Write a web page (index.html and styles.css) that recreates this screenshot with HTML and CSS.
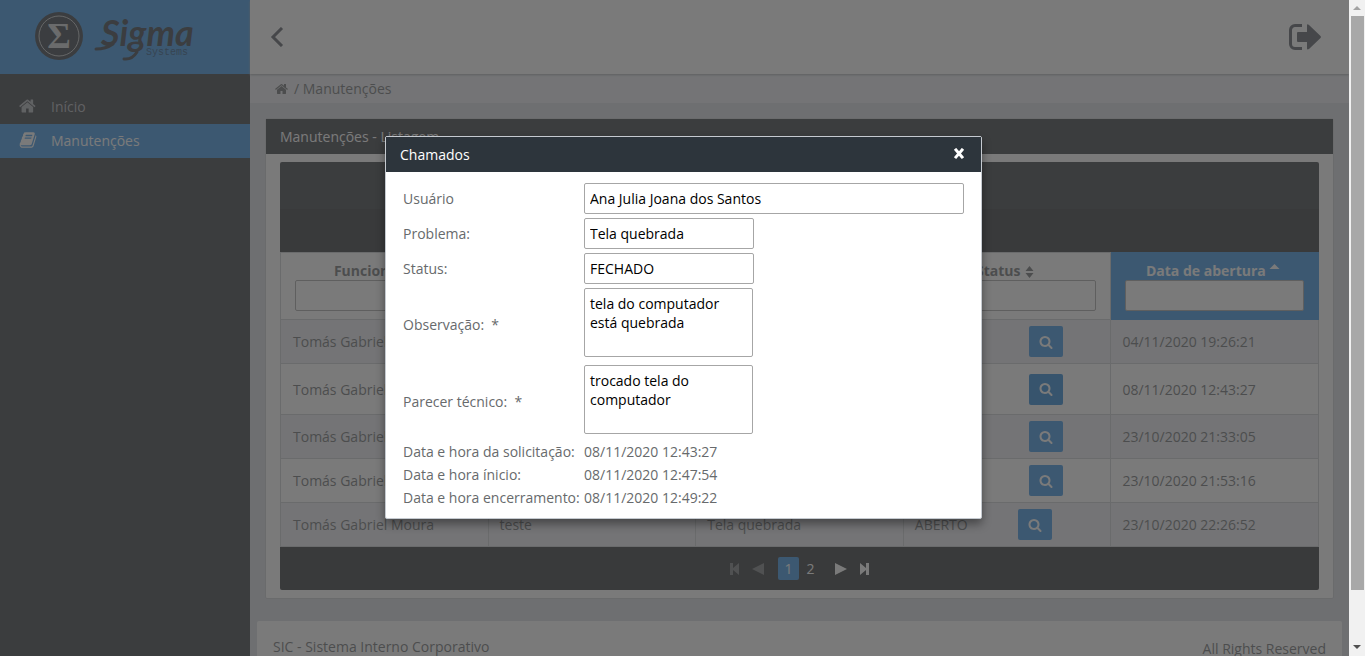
FILE: index.html
```html
<!DOCTYPE html>
<html lang="pt-BR">
<head>
<meta charset="utf-8">
<title>Manutenções</title>
<link rel="stylesheet" href="styles.css">
</head>
<body>
<svg class="defs" aria-hidden="true">
  <symbol id="home" viewBox="0 0 1792 1792"><path d="M1408 992v480q0 26-19 45t-45 19h-384v-384h-256v384h-384q-26 0-45-19t-19-45v-480q0-1 .5-3t.5-3l575-474 575 474q1 2 1 6zm223-69l-62 74q-8 9-21 11h-3q-13 0-21-7l-692-577-692 577q-12 8-24 7-13-2-21-11l-62-74q-8-10-7-23.5t11-21.5l719-599q32-26 76-26t76 26l244 204v-195q0-14 9-23t23-9h192q14 0 23 9t9 23v408l219 182q10 8 11 21.5t-7 23.5z"/></symbol>
  <symbol id="book" viewBox="0 0 1792 1792"><path d="M1703 478q40 57 18 129l-275 906q-19 64-76.5 107.5t-122.5 43.5h-923q-77 0-148.5-53.5t-99.5-131.5q-24-67-2-127 0-4 3-27t4-37q1-8-3-21.5t-3-19.5q2-11 8-21t16.5-23.5 16.5-23.5q23-38 45-91.5t30-91.5q3-10 .5-30t-.5-28q3-11 17-28t17-23q21-36 42-92t25-90q1-9-2.5-32t.5-28q4-13 22-30.5t22-22.5q19-26 42.5-84.5t27.5-96.5q1-8-3-25.5t-2-26.5q2-8 9-18t18-23 17-21q8-12 16.5-30.5t15-35 16-36 19.5-32 26.5-23.5 36-11.5 47.5 5.5l-1 3q38-9 51-9h761q74 0 114 56t18 130l-274 906q-36 119-71.5 153.5t-128.5 34.5h-869q-27 0-38 15-11 16-1 43 24 70 144 70h923q29 0 56-15.5t35-41.5l300-987q7-22 5-57 38 15 59 43zm-1064 2q-4 13 2 22.5t20 9.5h608q13 0 25.5-9.5t16.5-22.5l21-64q4-13-2-22.5t-20-9.5h-608q-13 0-25.5 9.5t-16.5 22.5zm-83 256q-4 13 2 22.5t20 9.5h608q13 0 25.5-9.5t16.5-22.5l21-64q4-13-2-22.5t-20-9.5h-608q-13 0-25.5 9.5t-16.5 22.5z"/></symbol>
  <symbol id="search" viewBox="0 0 1792 1792"><path d="M1216 832q0-185-131.5-316.5t-316.5-131.5-316.5 131.5-131.5 316.5 131.5 316.5 316.5 131.5 316.5-131.5 131.5-316.5zm512 832q0 52-38 90t-90 38q-54 0-90-38l-343-342q-179 124-399 124-143 0-273.5-55.5t-225-150-150-225-55.5-273.5 55.5-273.5 150-225 225-150 273.5-55.5 273.5 55.5 225 150 150 225 55.5 273.5q0 220-124 399l343 343q37 37 37 90z"/></symbol>
  <symbol id="sort" viewBox="0 0 8 12"><path d="M4 0l4 5H0zM4 12l4-5H0z"/></symbol>
</svg>
<div class="page">
  <nav class="sidebar">
    <a class="brand" href="#" aria-label="Sigma Systems">
      <svg class="logo" viewBox="0 0 250 74">
        <circle class="ink" cx="59" cy="36" r="24"/>
        <circle class="ring" cx="59" cy="36" r="20"/>
        <text class="logo-sum" x="59" y="48" text-anchor="middle">Σ</text>
        <text class="logo-name" x="101" y="46">Sigma</text>
        <path class="swash" d="M96 49q10 0 17-5M124 59q8 1 13-7"/>
        <text class="logo-sub" x="146" y="55">Systems</text>
      </svg>
    </a>
    <ul class="menu">
      <li><a href="#"><svg class="menu-icon"><use href="#home"/></svg>Início</a></li>
      <li><a class="active" href="#"><svg class="menu-icon"><use href="#book"/></svg>Manutenções</a></li>
    </ul>
  </nav>
  <div class="main">
    <header class="topbar">
      <button class="plain" aria-label="Recolher menu"><svg width="14" height="20" viewBox="0 0 14 20"><path class="chevron" d="M12 1L3 10l9 9"/></svg></button>
      <button class="plain" aria-label="Sair"><svg width="32" height="26" viewBox="0 0 32 26"><path class="door" d="M13 1.500H6A4.500 4.500 0 0 0 1.500 6v14A4.500 4.500 0 0 0 6 24.500h7"/><path d="M8 9q0-1 1-1h9V1.500q0-2 2-.5l11.500 11q.8 1 0 2L20 25q-2 1-2-.5V18H9q-1 0-1-1z"/></svg></button>
    </header>
    <div class="crumbs"><svg class="crumb-icon"><use href="#home"/></svg><span>/ Manutenções</span></div>
    <main class="content">
      <section class="panel">
        <h1 class="bar">Manutenções - Listagem</h1>
        <div class="panel-body">
          <div class="table-head"></div>
          <div class="table-tools"></div>
          <table class="grid">
            <thead>
              <tr>
                <th><label for="f1">Funcionário <svg class="sort"><use href="#sort"/></svg></label><input id="f1"></th>
                <th><label for="f2">Descrição <svg class="sort"><use href="#sort"/></svg></label><input id="f2"></th>
                <th><label for="f3">Problema <svg class="sort"><use href="#sort"/></svg></label><input id="f3"></th>
                <th><label for="f4">Status <svg class="sort"><use href="#sort"/></svg></label><input id="f4"></th>
                <th class="sorted"><label for="f5">Data de abertura <svg class="sort" viewBox="0 0 8 12"><path d="M4 0l5 5H-1z"/></svg></label><input id="f5"></th>
              </tr>
            </thead>
            <tbody>
              <tr><td>Tomás Gabriel Moura</td><td>teste</td><td>Tela quebrada</td><td><div class="status">FECHADO<button class="view" aria-label="Ver"><svg><use href="#search"/></svg></button></div></td><td>04/11/2020 19:26:21</td></tr>
              <tr class="tall"><td>Tomás Gabriel Moura</td><td>tela do computador está quebrada</td><td>Tela quebrada</td><td><div class="status">FECHADO<button class="view current" aria-label="Ver"><svg><use href="#search"/></svg></button></div></td><td>08/11/2020 12:43:27</td></tr>
              <tr><td>Tomás Gabriel Moura</td><td>teste</td><td>Tela quebrada</td><td><div class="status">FECHADO<button class="view" aria-label="Ver"><svg><use href="#search"/></svg></button></div></td><td>23/10/2020 21:33:05</td></tr>
              <tr><td>Tomás Gabriel Moura</td><td>teste</td><td>Tela quebrada</td><td><div class="status">FECHADO<button class="view" aria-label="Ver"><svg><use href="#search"/></svg></button></div></td><td>23/10/2020 21:53:16</td></tr>
              <tr><td>Tomás Gabriel Moura</td><td>teste</td><td>Tela quebrada</td><td><div class="status">ABERTO<button class="view" aria-label="Ver"><svg><use href="#search"/></svg></button></div></td><td>23/10/2020 22:26:52</td></tr>
            </tbody>
          </table>
          <div class="pager">
            <button disabled aria-label="Primeira"><svg viewBox="0 0 12 12"><path d="M1 0h3v5l6-5v12L4 7v5H1z"/></svg></button>
            <button disabled aria-label="Anterior"><svg viewBox="0 0 12 12"><path d="M12 0v12L0 6z"/></svg></button>
            <span class="pages"><button class="on">1</button><button>2</button></span>
            <button aria-label="Próxima"><svg viewBox="0 0 12 12"><path d="M0 0v12l12-6z"/></svg></button>
            <button aria-label="Última"><svg viewBox="0 0 12 12"><path d="M11 0H8v5L2 0v12l6-5v5h3z"/></svg></button>
          </div>
        </div>
      </section>
      <footer class="footer"><span>SIC - Sistema Interno Corporativo</span><span class="rights">All Rights Reserved</span></footer>
    </main>
  </div>
  <div class="overlay">
    <div class="dialog" role="dialog" aria-labelledby="dlg">
      <div class="dialog-bar"><h2 id="dlg">Chamados</h2><button class="plain close" aria-label="Fechar"><svg width="12" height="12" viewBox="0 0 12 12"><path d="M3 2l6 7M9 2L3 9"/></svg></button></div>
      <form class="form">
        <label for="user">Usuário</label><input class="wide" id="user" value="Ana Julia Joana dos Santos">
        <label for="prob">Problema:</label><input id="prob" value="Tela quebrada">
        <label for="stat">Status:</label><input id="stat" value="FECHADO">
        <label for="obs">Observação: &nbsp;*</label><textarea id="obs">tela do computador está quebrada</textarea>
        <label for="tec">Parecer técnico: &nbsp;*</label><textarea id="tec">trocado tela do computador</textarea>
      </form>
      <dl class="dates">
        <dt>Data e hora da solicitação:</dt><dd>08/11/2020 12:43:27</dd>
        <dt>Data e hora ínicio:</dt><dd>08/11/2020 12:47:54</dd>
        <dt>Data e hora encerramento:</dt><dd>08/11/2020 12:49:22</dd>
      </dl>
    </div>
  </div>
</div>
<div class="scroll" aria-hidden="true">
  <svg viewBox="0 0 16 16"><path class="dim" d="M8 6l4 4H4z"/></svg>
  <div class="track"><div class="thumb"></div></div>
  <svg viewBox="0 0 16 16"><path d="M8 9L4 5h8z"/></svg>
</div>
</body>
</html>
```
FILE: styles.css
```css
* { box-sizing: border-box; }
body {
  margin: 0;
  height: 100vh;
  display: flex;
  overflow: hidden;
  font: 14px/19px "Open Sans", "Noto Sans", sans-serif;
  color: #676a6c;
}
button, input, textarea { font: inherit; }
button { cursor: pointer; }
a { color: inherit; text-decoration: none; }
svg { fill: currentColor; }
.defs { position: absolute; width: 0; height: 0; }
.page { position: relative; flex: 1; display: flex; overflow: hidden; background: #d8dbe2; }
.plain { border: 0; background: none; padding: 0; color: #50565e; display: flex; }

.sidebar { width: 250px; flex: none; background: #2e3238; }
.brand { display: block; height: 74px; background: #308ee2; }
.logo { display: block; width: 250px; height: 74px; }
.ink { fill: #2d353c; }
.ring { fill: none; stroke: #b8bcc0; stroke-width: 1; }
.logo-sum { font: bold 36px "Liberation Serif", serif; fill: #c8ccd0; }
.logo-name { font: italic bold 36px Lato, sans-serif; fill: #2d353c; }
.logo-sub { font: 10px "Liberation Mono", monospace; fill: #1c4a78; }
.swash { fill: none; stroke: #2d353c; stroke-width: 3; stroke-linecap: round; }
.menu { list-style: none; margin: 0; padding: 16px 0 0; }
.menu a { display: flex; align-items: center; height: 34px; padding: 0 0 2px 19px; gap: 14px; color: #a9adb2; }
.menu a.active { background: #308ee2; color: #fff; }
.menu-icon { width: 18px; height: 18px; }

.main { flex: 1; min-width: 0; }
.topbar {
  position: relative;
  height: 74px;
  padding: 0 28px 0 20px;
  display: flex;
  justify-content: space-between;
  align-items: center;
  background: #fff;
  box-shadow: 0 1px 2px #a0a4aa;
}
.chevron, .door { fill: none; stroke: currentColor; stroke-width: 3; }
.crumbs { height: 29px; padding-left: 25px; display: flex; align-items: center; gap: 5px; background: #e9ebf0; }
.crumb-icon { width: 14px; height: 14px; }
.content { padding: 15px 7px 0; }

.panel { margin: 0 8px 22px; border: 1px solid #c8cbd1; border-radius: 2px; background: #fff; }
.bar { margin: 0; padding: 8px 14px; font-size: 14px; font-weight: 400; line-height: 19px; background: #2e3238; color: #fff; }
.panel-body { padding: 8px 14px; }
.table-head { height: 47px; border-radius: 2px 2px 0 0; background: #2e3238; }
.table-tools { height: 43px; background: #25282c; }
.grid { width: 100%; table-layout: fixed; border-collapse: collapse; }
.grid th, .grid td { border: 1px solid #c8cbd1; }
.grid th { height: 67px; padding: 8px 14px; }
.grid th label { display: block; line-height: 18px; }
.grid th input { display: block; width: 100%; height: 31px; border: 1px solid #a6a6a6; border-radius: 2px; background: #fff; }
.grid .sorted { background: #308ee2; border-color: #308ee2; color: #fff; }
.sort { width: 9px; height: 12px; margin: 0 4px 0 1px; vertical-align: -2px; overflow: visible; }
.sorted .sort { vertical-align: 0; }
.grid td { height: 44px; padding: 0 11px; }
.grid td:first-child { padding-left: 12px; }
.grid .tall td { height: 51px; }
.grid tbody tr:nth-child(odd) { background: #e9ebf0; }
.status { display: flex; align-items: center; gap: 50px; }
.view { flex: none; width: 34px; height: 31px; padding: 0; border: 0; border-radius: 2px; background: #308ee2; color: #fff; }
.view.current { background: #2181d4; }
.view svg { display: block; width: 14px; height: 14px; margin: 0 auto; }
.pager { height: 43px; display: flex; align-items: center; justify-content: center; gap: 11px; background: #25282c; border-radius: 0 0 2px 2px; }
.pager button { border: 0; background: none; padding: 0; color: #fff; }
.pager button:disabled { color: #747679; }
.pager svg { display: block; width: 12px; height: 12px; }
.pages { display: flex; gap: 1px; padding: 0 3px; }
.pages button { width: 21px; height: 23px; border-radius: 2px; }
.pages .on { background: #308ee2; }
.footer { display: flex; justify-content: space-between; height: 60px; padding: 16px; border-radius: 2px; background: #fff; }
.rights { padding-top: 2px; }

.overlay { position: absolute; inset: 0; padding: 0 0 2px 18px; display: flex; align-items: center; justify-content: center; background: rgba(66, 66, 66, .7); }
.dialog { width: 597px; border: 1px solid #c5cad0; border-radius: 2px; background: #fff; box-shadow: 0 5px 10px rgba(0, 0, 0, .4); }
.dialog-bar { height: 35px; padding: 0 16px 0 14px; display: flex; align-items: center; justify-content: space-between; background: #2d353c; }
.dialog h2 { margin: 0; font-size: 14px; font-weight: 400; color: #fff; }
.close { color: #fff; }
.close path { stroke: currentColor; stroke-width: 3; stroke-linecap: square; }
.form, .dates { display: grid; grid-template-columns: 177px 1fr; column-gap: 4px; align-items: center; padding: 0 17px; }
.form { padding-top: 11px; row-gap: 4px; }
.form input, .form textarea { width: 170px; height: 31px; padding: 5px; border: 1px solid #a6a6a6; border-radius: 2px; background: #fff; color: #000; }
.form .wide { width: 100%; }
.form textarea { width: 169px; height: 69px; margin-bottom: 4px; resize: none; display: block; overflow: hidden; }
.dates { margin: 4px 0 11px; row-gap: 4px; white-space: nowrap; }
.dates dd { margin: 0; }

.scroll { width: 16px; flex: none; display: flex; flex-direction: column; background: #f1f1f1; color: #505050; }
.scroll svg { width: 16px; height: 16px; }
.dim { fill: #a3a3a3; }
.track { flex: 1; padding: 0 1px 0 2px; }
.thumb { height: 92%; background: #a8a8a8; }
```
